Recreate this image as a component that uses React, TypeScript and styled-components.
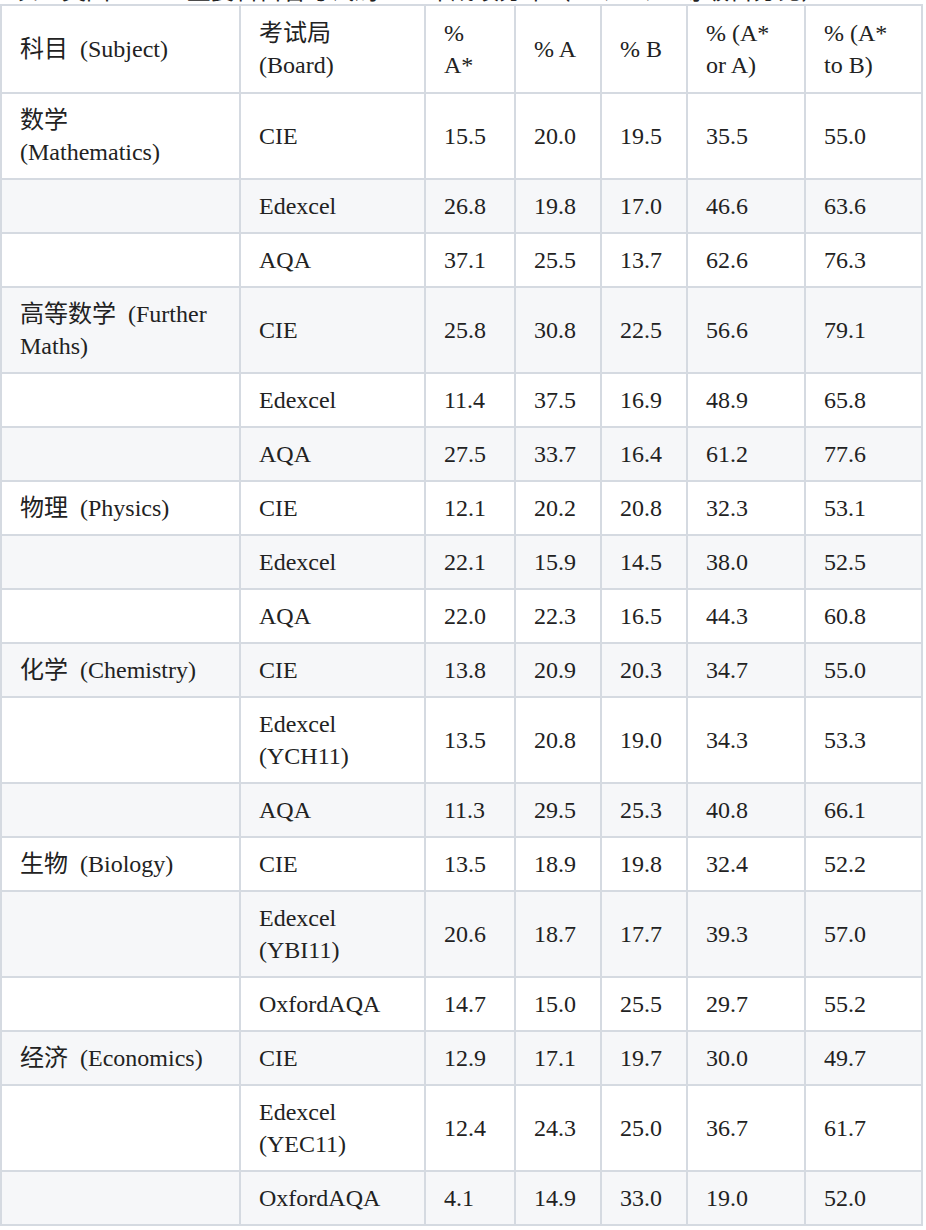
import React from "react";
import styled, { createGlobalStyle } from "styled-components";

const serif = `"Liberation Serif", "Times New Roman", "Noto Sans CJK SC", serif`;

const GlobalStyle = createGlobalStyle`
  html, body {
    margin: 0;
    padding: 0;
    background: #ffffff;
  }
  body {
    font-family: ${serif};
    color: #222222;
  }
`;

const Page = styled.div`
  width: 926px;
  overflow: hidden;
`;

// only the lower edge of the preceding paragraph is visible
const CaptionClip = styled.div`
  height: 3px;
  overflow: hidden;
  display: flex;
  align-items: flex-end;
  padding-left: 14px;
  margin-bottom: 1px;
`;

const CaptionText = styled.p`
  margin: 0;
  font-family: ${serif};
  font-size: 24px;
  line-height: 24px;
  white-space: nowrap;
  color: #222222;
`;

const Table = styled.table`
  border-collapse: collapse;
  table-layout: fixed;
  width: 923px;
  font-family: ${serif};
  font-size: 24px;
  line-height: 32px;
  color: #222222;
`;

const Row = styled.tr<{ $striped?: boolean }>`
  background: ${(p) => (p.$striped ? "#f6f7f9" : "#ffffff")};
`;

const HeadCell = styled.th<{ $wide?: boolean }>`
  border: 2px solid #d5dae1;
  padding: 11px ${(p) => (p.$wide ? "28px" : "18px")} 11px 18px;
  text-align: left;
  vertical-align: middle;
  font-weight: 400;
  font-family: ${serif};
`;

const Cell = styled.td<{ $wide?: boolean }>`
  border: 2px solid #d5dae1;
  padding: 10px ${(p) => (p.$wide ? "28px" : "18px")} 10px 18px;
  vertical-align: middle;
  font-family: ${serif};
`;

type Line = {
  subject?: string;
  board: string;
  values: string[];
};

// en space between the Chinese name and the bracketed English
const gap = "\u2002";

const headers = [`考试局${gap}(Board)`, "% A*", "% A", "% B", "% (A* or A)", "% (A* to B)"];
const widths = [239, 185, 90, 86, 86, 118, 117];

const rows: Line[] = [
  { subject: `数学${gap}(Mathematics)`, board: "CIE", values: ["15.5", "20.0", "19.5", "35.5", "55.0"] },
  { board: "Edexcel", values: ["26.8", "19.8", "17.0", "46.6", "63.6"] },
  { board: "AQA", values: ["37.1", "25.5", "13.7", "62.6", "76.3"] },
  { subject: `高等数学${gap}(Further Maths)`, board: "CIE", values: ["25.8", "30.8", "22.5", "56.6", "79.1"] },
  { board: "Edexcel", values: ["11.4", "37.5", "16.9", "48.9", "65.8"] },
  { board: "AQA", values: ["27.5", "33.7", "16.4", "61.2", "77.6"] },
  { subject: `物理${gap}(Physics)`, board: "CIE", values: ["12.1", "20.2", "20.8", "32.3", "53.1"] },
  { board: "Edexcel", values: ["22.1", "15.9", "14.5", "38.0", "52.5"] },
  { board: "AQA", values: ["22.0", "22.3", "16.5", "44.3", "60.8"] },
  { subject: `化学${gap}(Chemistry)`, board: "CIE", values: ["13.8", "20.9", "20.3", "34.7", "55.0"] },
  { board: "Edexcel (YCH11)", values: ["13.5", "20.8", "19.0", "34.3", "53.3"] },
  { board: "AQA", values: ["11.3", "29.5", "25.3", "40.8", "66.1"] },
  { subject: `生物${gap}(Biology)`, board: "CIE", values: ["13.5", "18.9", "19.8", "32.4", "52.2"] },
  { board: "Edexcel (YBI11)", values: ["20.6", "18.7", "17.7", "39.3", "57.0"] },
  { board: "OxfordAQA", values: ["14.7", "15.0", "25.5", "29.7", "55.2"] },
  { subject: `经济${gap}(Economics)`, board: "CIE", values: ["12.9", "17.1", "19.7", "30.0", "49.7"] },
  { board: "Edexcel (YEC11)", values: ["12.4", "24.3", "25.0", "36.7", "61.7"] },
  { board: "OxfordAQA", values: ["4.1", "14.9", "33.0", "19.0", "52.0"] },
];

export default function App() {
  return (
    <Page>
      <GlobalStyle />
      <CaptionClip>
        <CaptionText>
          表：英国A Level主要科目各考试局2023年成绩分布（A*、A、B等级百分比）
        </CaptionText>
      </CaptionClip>
      <Table>
        <colgroup>
          {widths.map((w, i) => (
            <col key={i} style={{ width: w }} />
          ))}
        </colgroup>
        <thead>
          <Row>
            <HeadCell $wide>科目{gap}(Subject)</HeadCell>
            {headers.map((h) => (
              <HeadCell key={h}>{h}</HeadCell>
            ))}
          </Row>
        </thead>
        <tbody>
          {rows.map((r, i) => (
            <Row key={i} $striped={i % 2 === 1}>
              <Cell $wide>{r.subject ?? ""}</Cell>
              <Cell>{r.board}</Cell>
              {r.values.map((v, j) => (
                <Cell key={j}>{v}</Cell>
              ))}
            </Row>
          ))}
        </tbody>
      </Table>
    </Page>
  );
}
